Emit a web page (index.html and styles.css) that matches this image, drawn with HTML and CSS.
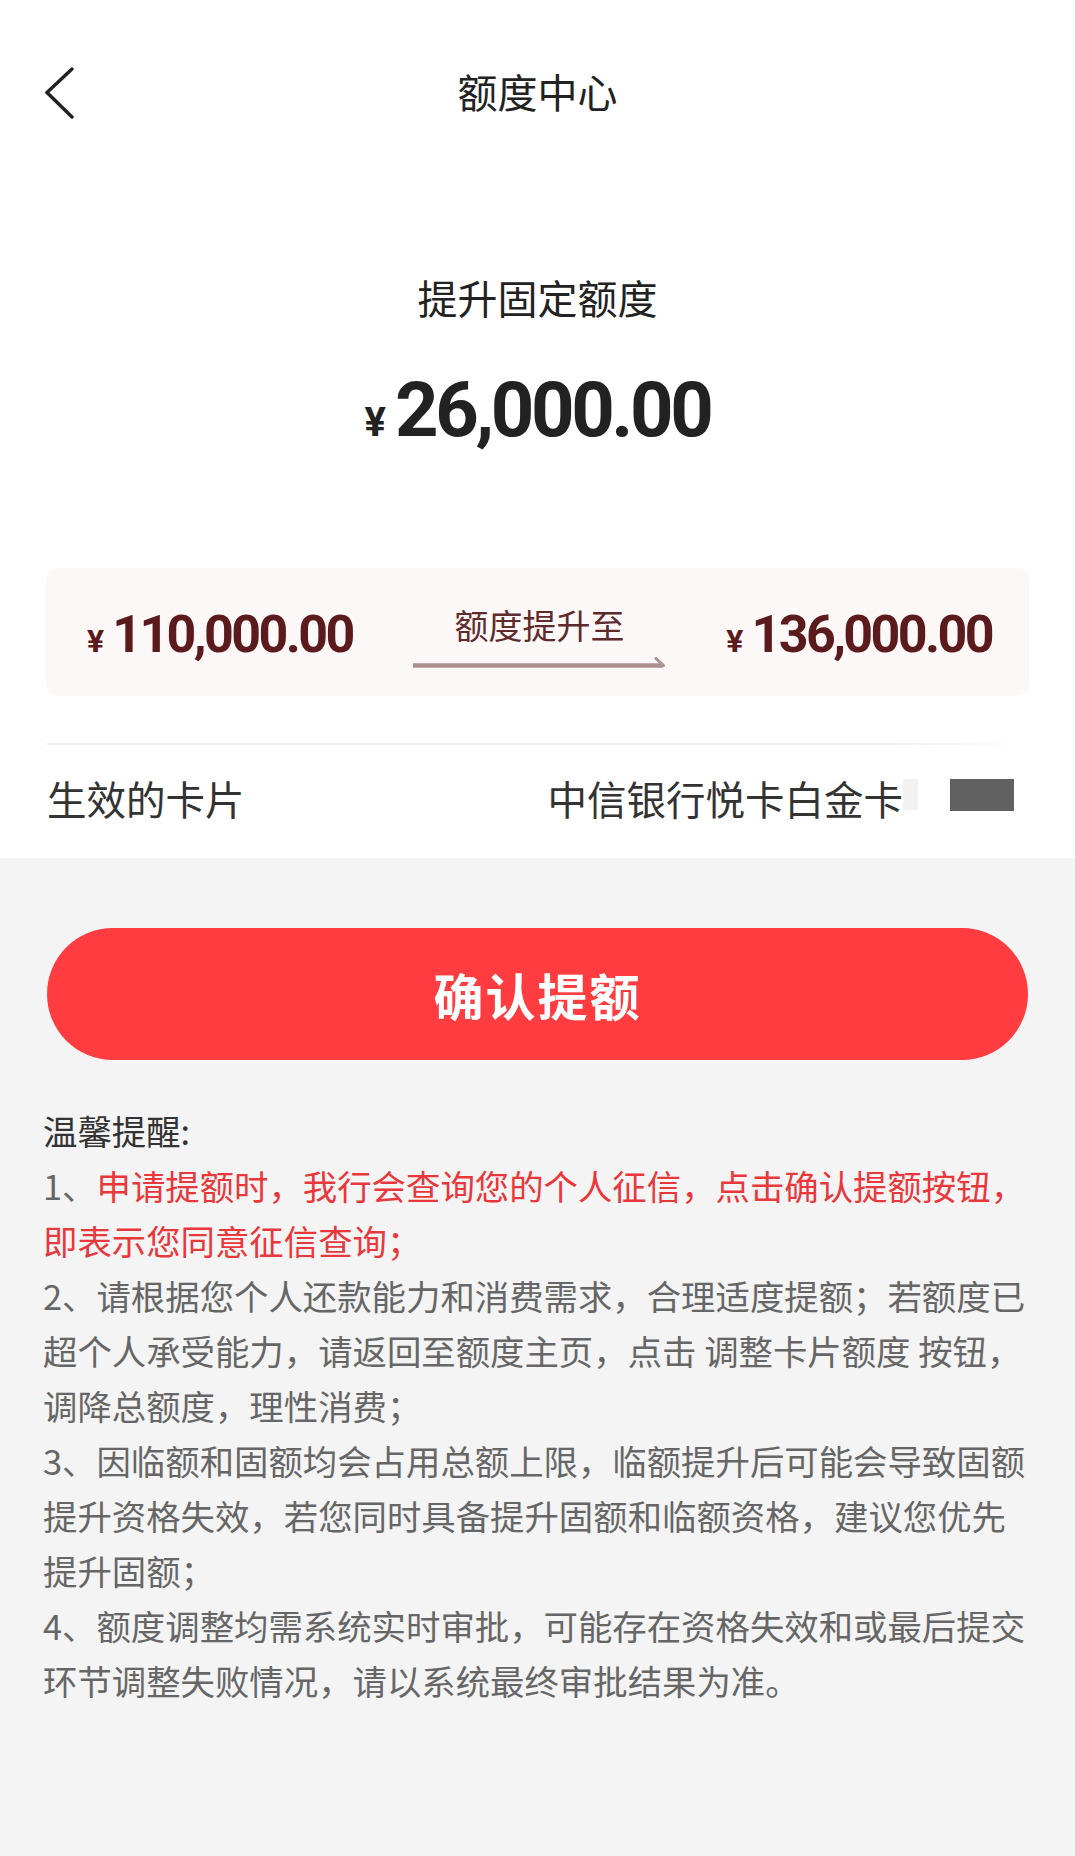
FILE: index.html
```html
<!DOCTYPE html>
<html lang="zh-CN">
<head>
<meta charset="utf-8">
<title>额度中心</title>
<link rel="stylesheet" href="styles.css">
</head>
<body>
<div class="page">
  <section class="top">
    <header class="nav">
      <span class="back">
        <svg class="back-icon" width="30" height="52" viewBox="0 0 30 52" aria-hidden="true">
          <path d="M27 2 L2 25.5 L27 50" fill="none" stroke="#222" stroke-width="3.4" stroke-linecap="round" stroke-linejoin="miter"/>
        </svg>
      </span>
      <h1 class="nav-title">额度中心</h1>
      <span class="nav-side"></span>
    </header>

    <div class="hero">
      <p class="hero-label">提升固定额度</p>
      <p class="hero-amount"><span class="cur">¥</span>26,000.00</p>
    </div>

    <div class="compare">
      <div class="amt"><span class="cur">¥</span>110,000.00</div>
      <div class="mid">
        <span class="mid-text">额度提升至</span>
        <svg class="arrow" width="253" height="12" viewBox="0 0 253 12" aria-hidden="true">
          <path d="M0 8.5 H250" stroke="#ae8f90" stroke-width="4.6" fill="none"/>
          <path d="M243 1.5 L250.5 8.5" stroke="#ae8f90" stroke-width="3" stroke-linecap="round" fill="none"/>
        </svg>
      </div>
      <div class="amt"><span class="cur">¥</span>136,000.00</div>
    </div>

    <div class="divider"></div>

    <div class="card-row">
      <span class="row-label">生效的卡片</span>
      <span class="row-value">中信银行悦卡白金卡<span class="mask-light"></span><span class="mask-dark"></span></span>
    </div>
  </section>

  <section class="bottom">
    <button class="confirm" type="button">确认提额</button>
    <div class="notes">
      <p class="notes-title">温馨提醒:</p>
      <p>1、<span class="warn">申请提额时，我行会查询您的个人征信，点击确认提额按钮，<br>即表示您同意征信查询；</span></p>
      <p>2、请根据您个人还款能力和消费需求，合理适度提额；若额度已<br>超个人承受能力，请返回至额度主页，点击 调整卡片额度 按钮，<br>调降总额度，理性消费；</p>
      <p>3、因临额和固额均会占用总额上限，临额提升后可能会导致固额<br>提升资格失效，若您同时具备提升固额和临额资格，建议您优先<br>提升固额；</p>
      <p>4、额度调整均需系统实时审批，可能存在资格失效和或最后提交<br>环节调整失败情况，请以系统最终审批结果为准。</p>
    </div>
  </section>
</div>
</body>
</html>
```

FILE: styles.css
```css
* {
  box-sizing: border-box;
}

html, body {
  margin: 0;
  padding: 0;
  background: #f4f4f4;
}

body {
  font-family: "Noto Sans CJK SC", "Noto Sans", sans-serif;
  color: #222;
}

p, h1 {
  margin: 0;
}

.page {
  width: 1075px;
  min-height: 1856px;
  background: #f4f4f4;
}

.top {
  background: #fff;
}

/* nav bar */
.nav {
  height: 185px;
  display: grid;
  grid-template-columns: 1fr auto 1fr;
  align-items: center;
}

.back {
  padding-left: 45px;
  display: flex;
  align-items: center;
}

.back-icon {
  display: block;
}

.nav-title {
  font-size: 40px;
  line-height: 1;
  font-weight: 400;
  color: #222;
  margin-top: -3px;
}

/* hero */
.hero {
  text-align: center;
}

.hero-label {
  margin-top: 84px;
  font-size: 40px;
  line-height: 56px;
  color: #222;
}

.hero-amount {
  margin-top: 45px;
  font-family: Roboto, "Noto Sans", sans-serif;
  font-weight: 700;
  font-size: 76px;
  line-height: 80px;
  letter-spacing: -3.4px;
  color: #222;
}

.hero-amount .cur {
  font-size: 40px;
  letter-spacing: 0;
  margin-right: 9px;
}

/* compare card */
.compare {
  margin: 105px 46px 0;
  height: 128px;
  background: #fdf8f8;
  border-radius: 12px;
  display: flex;
  align-items: center;
  justify-content: space-between;
  padding: 0 37px 0 41px;
}

.amt {
  font-family: Roboto, "Noto Sans", sans-serif;
  font-weight: 700;
  font-size: 52px;
  line-height: 60px;
  letter-spacing: -2.6px;
  color: #5b1a1c;
  white-space: nowrap;
  margin-top: 12px;
}

.amt .cur {
  font-size: 32px;
  letter-spacing: 0;
  margin-right: 8px;
}

.mid {
  display: flex;
  flex-direction: column;
  align-items: center;
  margin-top: 10px;
}

.mid-text {
  font-size: 34px;
  line-height: 40px;
  color: #5e2a2c;
}

.arrow {
  display: block;
  margin-top: 12px;
}

/* divider + card row */
.divider {
  margin: 47px 47px 0;
  height: 2px;
  background: linear-gradient(to right, #efefef 0%, #efefef 85%, rgba(239, 239, 239, 0) 100%);
}

.card-row {
  height: 113px;
  display: flex;
  align-items: center;
  justify-content: space-between;
  padding: 0 61px 8px 47px;
  font-size: 39.5px;
  color: #333;
}

.row-label {
  line-height: 1;
}

.row-value {
  display: flex;
  align-items: center;
  line-height: 1;
}

.mask-light {
  display: inline-block;
  width: 15px;
  height: 31px;
  background: #f2f2f2;
  margin-bottom: 6px;
}

.mask-dark {
  display: inline-block;
  width: 64px;
  height: 32px;
  background: #616161;
  margin-left: 32px;
  margin-bottom: 6px;
}

/* bottom area */
.bottom {
  padding: 70px 0 0;
}

.confirm {
  display: block;
  width: 981px;
  height: 132px;
  margin: 0 47px;
  border: none;
  border-radius: 66px;
  background: #ff3d40;
  color: #fff;
  font-family: "Noto Sans CJK SC", sans-serif;
  font-size: 50px;
  font-weight: 700;
  letter-spacing: 2px;
  padding: 0;
}

.notes {
  padding: 43px 40px 0 43px;
  font-size: 34.4px;
  line-height: 55px;
  color: #666;
}

.notes-title {
  color: #333;
}

.warn {
  color: #e8383c;
}
```
